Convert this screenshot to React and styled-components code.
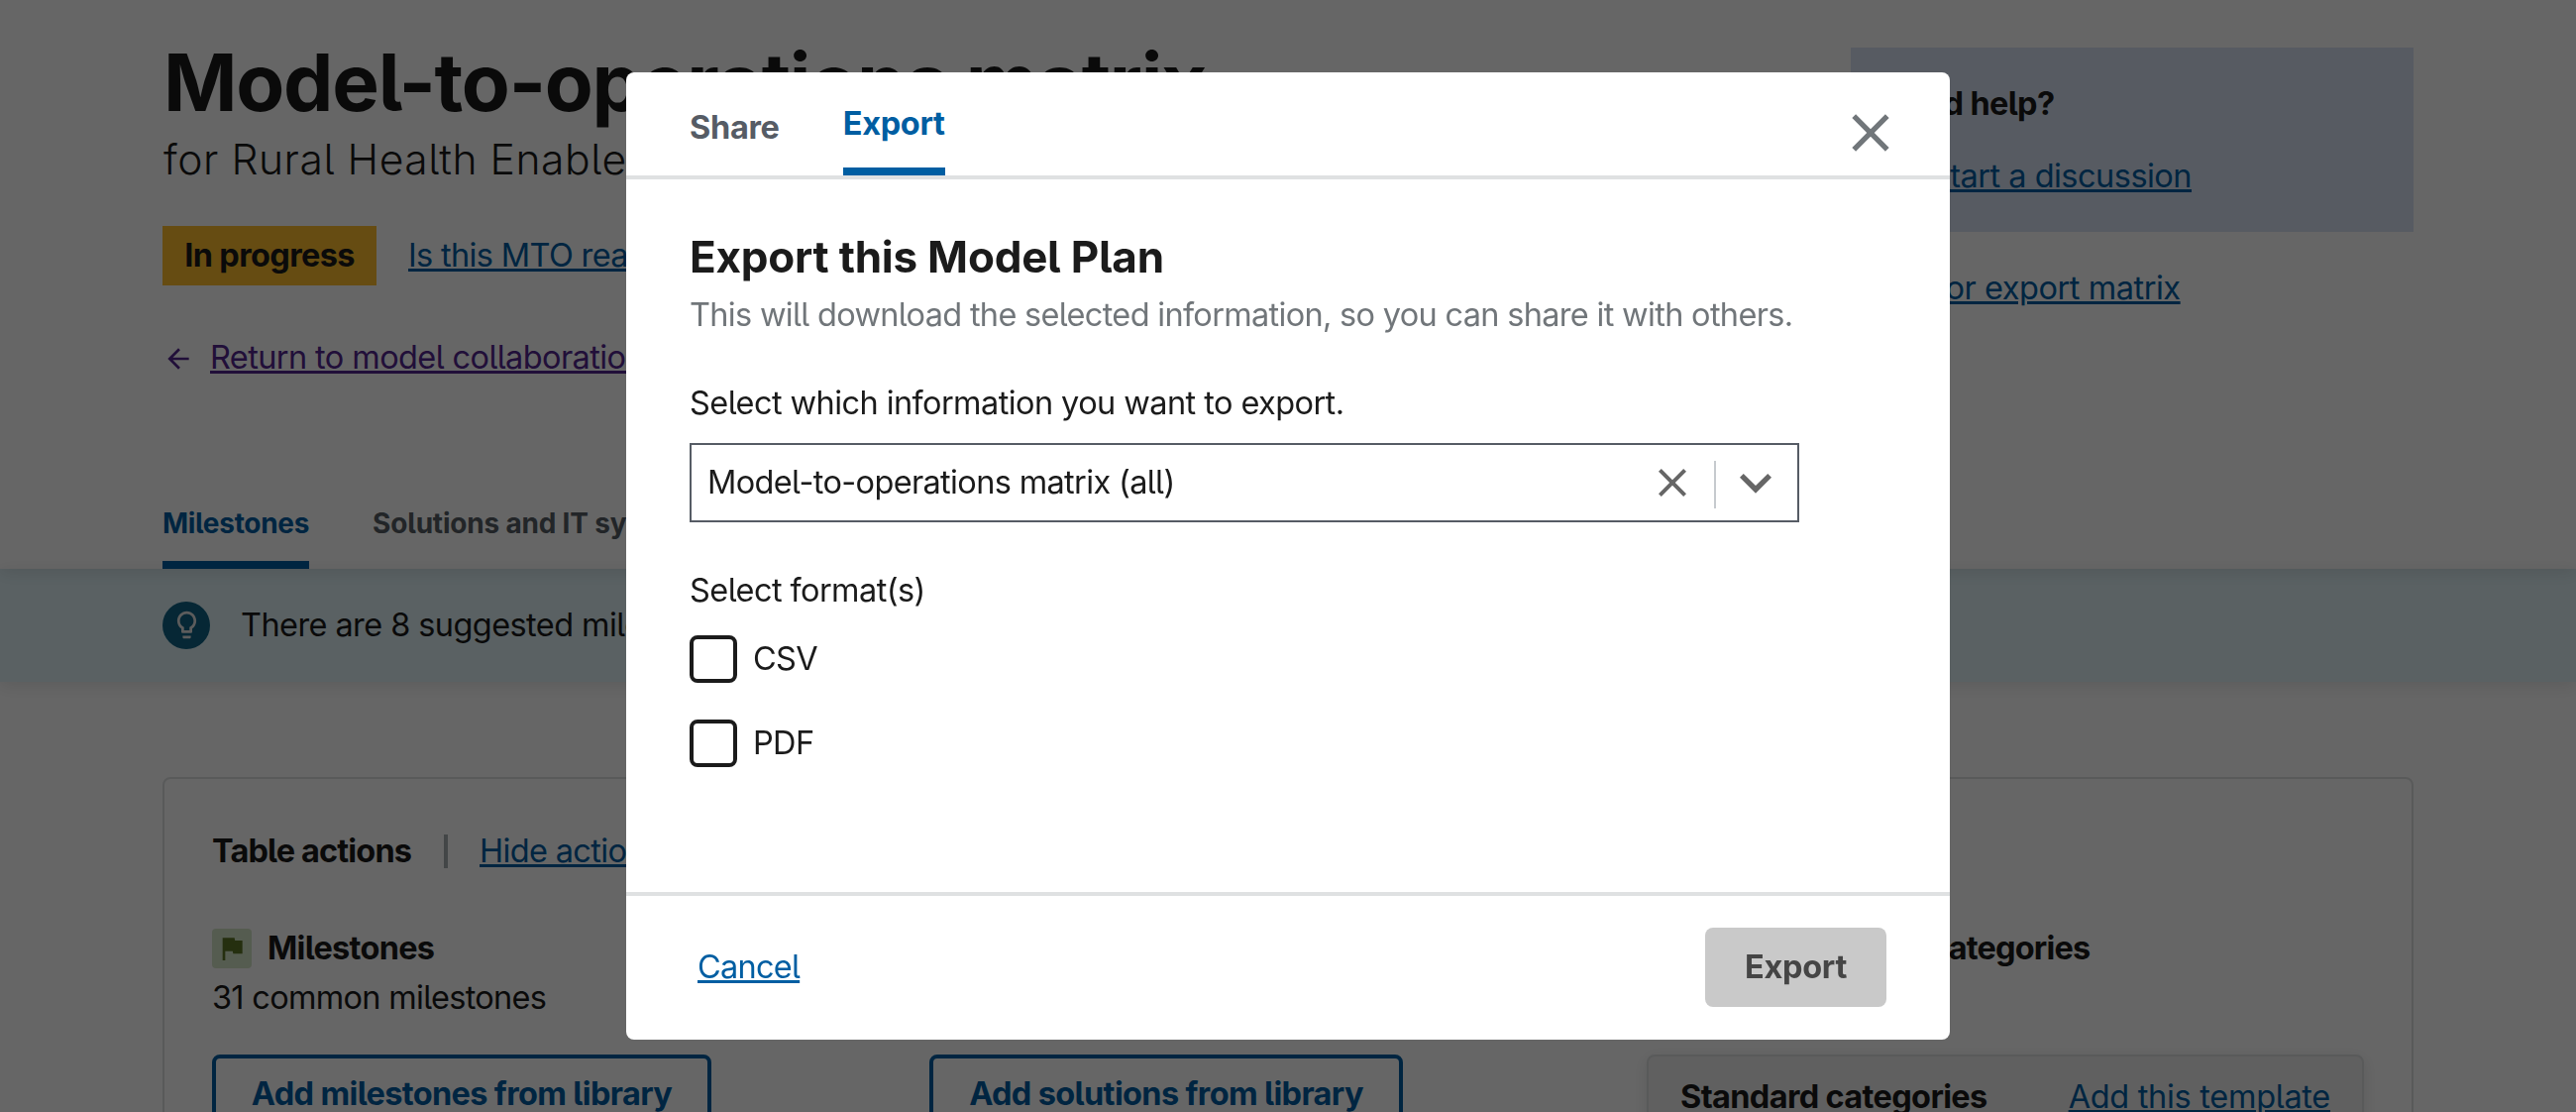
import React from "react";
import styled, { createGlobalStyle, css } from "styled-components";

const color = {
  ink: "#1b1b1b",
  muted: "#71767a",
  dark: "#565c65",
  link: "#005ea2",
  visited: "#54278f",
  line: "#dfe1e2",
};

const GlobalStyle = createGlobalStyle`
  *, *::before, *::after { box-sizing: border-box; }
  html, body { margin: 0; height: 100%; overflow: hidden; background: #fff; }
  body {
    font-family: "Inter", "Open Sans", sans-serif;
    font-size: 32.5px;
    line-height: 40px;
    letter-spacing: -0.65px;
    font-feature-settings: "cv05";
    color: ${color.ink};
  }
  h1, h2, h3, p { margin: 0; }
  button { font: inherit; letter-spacing: inherit; font-feature-settings: inherit; cursor: pointer; }
`;

/* ---------- shared ---------- */

const linkStyle = css`
  color: ${(p) => (p.$visited ? color.visited : color.link)};
  text-decoration: underline;
  text-decoration-thickness: 3px;
  text-underline-offset: 2px;
  letter-spacing: ${(p) => p.$tracking || "-0.65px"};
  white-space: nowrap;
`;

const TextLink = styled.a`
  ${linkStyle}
`;

const Icon = styled.svg`
  display: block;
  flex: none;
  width: ${(p) => p.$size}px;
  height: ${(p) => p.$size}px;
  fill: ${(p) => p.$color || "currentColor"};
`;

const paths = {
  close:
    "M19 6.41 17.59 5 12 10.59 6.41 5 5 6.41 10.59 12 5 17.59 6.41 19 12 13.41 17.59 19 19 17.59 13.41 12z",
  expand: "M16.59 8.59 12 13.17 7.41 8.59 6 10l6 6 6-6z",
  back: "M20 11H7.83l5.59-5.59L12 4l-8 8 8 8 1.41-1.41L7.83 13H20v-2z",
  flag: "M14.4 6 14 4H5v17h2v-7h5.6l.4 2h7V6z",
  bulb: "M9 21c0 .55.45 1 1 1h4c.55 0 1-.45 1-1v-1H9v1zm3-19C8.14 2 5 5.14 5 9c0 2.38 1.19 4.47 3 5.74V17c0 .55.45 1 1 1h6c.55 0 1-.45 1-1v-2.26c1.81-1.27 3-3.36 3-5.74 0-3.86-3.14-7-7-7zm2.85 11.1-.85.6V16h-4v-2.3l-.85-.6C7.8 12.16 7 10.63 7 9c0-2.76 2.24-5 5-5s5 2.24 5 5c0 1.63-.8 3.16-2.15 4.1z",
  chat: "M20 2H4c-1.1 0-2 .9-2 2v18l4-4h14c1.1 0 2-.9 2-2V4c0-1.1-.9-2-2-2z",
  grid: "M4 4h7v7H4zM13 4h7v7h-7zM4 13h7v7H4zM13 13h7v7h-7z",
};

const Glyph = ({ name, size, fill, className }) => (
  <Icon viewBox="0 0 24 24" $size={size} $color={fill} className={className} aria-hidden="true">
    <path d={paths[name]} />
  </Icon>
);

/* ---------- page ---------- */

const Page = styled.div`
  height: 1122px;
  overflow: hidden;
`;

const Header = styled.header`
  position: relative;
  z-index: 1;
  height: 574px;
  padding: 0 164px;
  display: flex;
  flex-direction: column;
  justify-content: space-between;
  box-shadow: 0 4px 16px rgba(0, 0, 0, 0.1);
`;

const Hero = styled.div`
  display: flex;
  justify-content: space-between;
`;

const Intro = styled.div`
  padding-top: 35px;
`;

const Title = styled.h1`
  padding-left: 1px;
  font-size: 80px;
  line-height: 96px;
  font-weight: 700;
  letter-spacing: -1.25px;
  white-space: nowrap;
`;

const Subtitle = styled.p`
  margin-top: 2px;
  padding-left: 1px;
  font-size: 42.6px;
  line-height: 56px;
  font-weight: 340;
  letter-spacing: 0.55px;
`;

const StatusRow = styled.div`
  display: flex;
  gap: 32px;
  height: 60px;
  margin-top: 39px;
  line-height: 59px;
`;

const Status = styled.span`
  width: 216px;
  height: 60px;
  background: #ffbe2e;
  font-weight: 700;
  text-align: center;
`;

const BackRow = styled.div`
  display: flex;
  align-items: center;
  gap: 16px;
  margin-top: 53px;
  color: ${color.visited};
`;

const BackIcon = styled(Glyph)`
  margin-top: 2px;
`;

const Aside = styled.aside`
  width: 568px;
  padding-top: 48px;
`;

const HelpBox = styled.section`
  height: 186px;
  padding: 37px 32px 0;
  background: #d9e4f5;
`;

const HelpTitle = styled.h3`
  font-size: inherit;
  font-weight: 700;
`;

const HelpLink = styled.div`
  display: flex;
  align-items: center;
  gap: 16px;
  margin-top: 33px;
  color: ${color.link};
`;

const ShareLink = styled.div`
  margin-top: 37px;
`;

const PageTabs = styled.nav`
  display: flex;
  gap: 64px;
`;

const PageTab = styled.a`
  padding-bottom: 18px;
  border-bottom: 8px solid ${(p) => (p.$active ? color.link : "transparent")};
  color: ${(p) => (p.$active ? color.link : color.dark)};
  font-size: 28px;
  font-weight: 700;
  letter-spacing: ${(p) => (p.$active ? -0.3 : -0.2)}px;
`;

const Banner = styled.section`
  display: flex;
  align-items: center;
  gap: 31px;
  height: 114px;
  padding: 0 164px 1px;
  background: #e1f3f8;
  box-shadow: 0 4px 16px rgba(0, 0, 0, 0.1);
  letter-spacing: -0.58px;
`;

const BulbBadge = styled.span`
  display: grid;
  place-items: center;
  width: 48px;
  height: 48px;
  border-radius: 50%;
  background: #0f6285;
`;

const Actions = styled.section`
  height: 420px;
  margin: 96px 164px 0;
  padding: 56px 48px 0;
  border: 2px solid ${color.line};
  border-radius: 8px;
`;

const ActionsHeader = styled.div`
  display: flex;
  gap: 32px;
  height: 34px;
  line-height: 34px;
`;

const ActionsTitle = styled.span`
  width: 202px;
  font-weight: 700;
  letter-spacing: -0.85px;
  white-space: nowrap;
`;

const Divider = styled.span`
  width: 4px;
  height: 34px;
  background: #a9aeb1;
`;

const Columns = styled.div`
  display: grid;
  grid-template-columns: repeat(3, 1fr);
  margin-top: 61px;
`;

const ColumnTitle = styled.div`
  display: flex;
  gap: 16px;
  height: 40px;
  line-height: 40px;
  font-weight: 700;
  letter-spacing: ${(p) => p.$tracking || "-0.7px"};
`;

const IconTile = styled.span`
  display: grid;
  place-items: center;
  width: 40px;
  height: 40px;
  border-radius: 4px;
  background: ${(p) => p.$bg};
`;

const Count = styled.p`
  height: 40px;
  margin: 10px 0 37px;
  letter-spacing: -0.7px;
`;

const OutlineButton = styled.button`
  width: ${(p) => p.$width}px;
  height: 80px;
  padding: 0;
  border: 4px solid ${color.link};
  border-radius: 8px;
  background: transparent;
  color: ${color.link};
  font-weight: 700;
  letter-spacing: -0.64px;
`;

const TemplateCard = styled.div`
  display: flex;
  justify-content: space-between;
  height: 160px;
  padding: 21px 32px;
  border: 2px solid ${color.line};
  border-radius: 8px;
  background: #f0f0f0;
  box-shadow: 0 4px 16px rgba(0, 0, 0, 0.1);
`;

const TemplateName = styled.span`
  font-weight: 700;
`;

/* ---------- modal ---------- */

const Overlay = styled.div`
  position: fixed;
  inset: 0;
  z-index: 10;
  display: flex;
  align-items: center;
  justify-content: center;
  background: rgba(0, 0, 0, 0.6);
`;

const Dialog = styled.div`
  display: flex;
  flex-direction: column;
  width: 1336px;
  height: 976px;
  border-radius: 8px;
  background: #fff;
`;

const DialogHeader = styled.div`
  display: flex;
  justify-content: space-between;
  height: 108px;
  padding: 0 48px 0 64px;
  border-bottom: 4px solid ${color.line};
`;

const DialogTabs = styled.div`
  display: flex;
  gap: 64px;
`;

const DialogTab = styled.span`
  height: 104px;
  padding-top: ${(p) => (p.$active ? 7 : 11)}px;
  border-bottom: ${(p) => (p.$active ? `8px solid ${color.link}` : "0")};
  color: ${(p) => (p.$active ? color.link : color.dark)};
  line-height: 89px;
  font-weight: 700;
  letter-spacing: -0.3px;
`;

const CloseButton = styled.button`
  align-self: flex-start;
  margin-top: 28.5px;
  padding: 0;
  border: 0;
  background: none;
  color: ${color.muted};
`;

const DialogBody = styled.div`
  flex: 1;
  padding: 50px 64px 0;
`;

const DialogTitle = styled.h2`
  font-size: 44px;
  line-height: 56px;
  font-weight: 700;
  letter-spacing: -0.23px;
`;

const Description = styled.p`
  margin-top: 11px;
  color: ${color.muted};
  letter-spacing: -0.69px;
  white-space: nowrap;
`;

const FieldLabel = styled.p`
  margin-top: 49px;
  letter-spacing: -0.58px;
`;

const Select = styled.div`
  display: flex;
  align-items: center;
  width: 1120px;
  height: 80px;
  margin-top: 20px;
  padding: 0 10px 0 16px;
  border: 2px solid ${color.dark};
  color: #666;
`;

const SelectValue = styled.span`
  flex: 1;
  color: ${color.ink};
`;

const SelectDivider = styled.span`
  width: 2px;
  height: 48px;
  margin: 4px 8px 0 18px;
  background: #c6cace;
`;

const Options = styled.div`
  display: grid;
  gap: 37px;
  margin-top: 25px;
`;

const Option = styled.label`
  display: flex;
  gap: 16px;
  height: 48px;
  line-height: 47px;
`;

const Box = styled.span`
  width: 48px;
  height: 48px;
  border: 4px solid ${color.ink};
  border-radius: 8px;
`;

const DialogFooter = styled.div`
  display: flex;
  justify-content: space-between;
  height: 149px;
  padding: 32px 64px 0 72px;
  border-top: 4px solid ${color.line};
  line-height: 80px;
`;

const ExportButton = styled.button`
  width: 183px;
  height: 80px;
  padding: 0;
  border: 0;
  border-radius: 8px;
  background: #c9c9c9;
  color: #454545;
  font-weight: 700;
  letter-spacing: -0.3px;
`;

export default function App() {
  return (
    <>
      <GlobalStyle />
      <Page>
        <Header>
          <Hero>
            <Intro>
              <Title>Model-to-operations matrix</Title>
              <Subtitle>for Rural Health Enablement</Subtitle>
              <StatusRow>
                <Status>In progress</Status>
                <TextLink>Is this MTO ready for review?</TextLink>
              </StatusRow>
              <BackRow>
                <BackIcon name="back" size={32} />
                <TextLink $visited $tracking="-0.6px">
                  Return to model collaboration area
                </TextLink>
              </BackRow>
            </Intro>
            <Aside>
              <HelpBox>
                <HelpTitle>Need help?</HelpTitle>
                <HelpLink>
                  <Glyph name="chat" size={32} />
                  <TextLink $tracking="-0.52px">Start a discussion</TextLink>
                </HelpLink>
              </HelpBox>
              <ShareLink>
                <TextLink $tracking="-0.45px">Share or export matrix</TextLink>
              </ShareLink>
            </Aside>
          </Hero>
          <PageTabs>
            <PageTab $active>Milestones</PageTab>
            <PageTab>Solutions and IT systems</PageTab>
          </PageTabs>
        </Header>

        <Banner>
          <BulbBadge>
            <Glyph name="bulb" size={33} fill="#e6e6e6" />
          </BulbBadge>
          <span>There are 8 suggested milestones</span>
        </Banner>

        <Actions>
          <ActionsHeader>
            <ActionsTitle>Table actions</ActionsTitle>
            <Divider />
            <TextLink>Hide actions</TextLink>
          </ActionsHeader>
          <Columns>
            <div>
              <ColumnTitle>
                <IconTile $bg="#d5e6c9">
                  <Glyph name="flag" size={32} fill="#5e7727" />
                </IconTile>
                Milestones
              </ColumnTitle>
              <Count>31 common milestones</Count>
              <OutlineButton $width={504}>Add milestones from library</OutlineButton>
            </div>
            <div>
              <ColumnTitle>Solutions</ColumnTitle>
              <Count>Common solutions</Count>
              <OutlineButton $width={478}>Add solutions from library</OutlineButton>
            </div>
            <div>
              <ColumnTitle $tracking="-0.83px">
                <IconTile $bg="#e1f3f8">
                  <Glyph name="grid" size={32} fill={color.link} />
                </IconTile>
                Templates and categories
              </ColumnTitle>
              <Count>Templates</Count>
              <TemplateCard>
                <TemplateName>Standard categories</TemplateName>
                <TextLink $tracking="-0.3px">Add this template</TextLink>
              </TemplateCard>
            </div>
          </Columns>
        </Actions>
      </Page>

      <Overlay>
        <Dialog role="dialog" aria-modal="true">
          <DialogHeader>
            <DialogTabs>
              <DialogTab>Share</DialogTab>
              <DialogTab $active>Export</DialogTab>
            </DialogTabs>
            <CloseButton aria-label="Close">
              <Glyph name="close" size={64} />
            </CloseButton>
          </DialogHeader>
          <DialogBody>
            <DialogTitle>Export this Model Plan</DialogTitle>
            <Description>
              This will download the selected information, so you can share it with others.
            </Description>
            <FieldLabel>Select which information you want to export.</FieldLabel>
            <Select>
              <SelectValue>Model-to-operations matrix (all)</SelectValue>
              <Glyph name="close" size={48} />
              <SelectDivider />
              <Glyph name="expand" size={64} />
            </Select>
            <FieldLabel>Select format(s)</FieldLabel>
            <Options>
              <Option>
                <Box />
                CSV
              </Option>
              <Option>
                <Box />
                PDF
              </Option>
            </Options>
          </DialogBody>
          <DialogFooter>
            <TextLink $tracking="-0.75px">Cancel</TextLink>
            <ExportButton>Export</ExportButton>
          </DialogFooter>
        </Dialog>
      </Overlay>
    </>
  );
}
